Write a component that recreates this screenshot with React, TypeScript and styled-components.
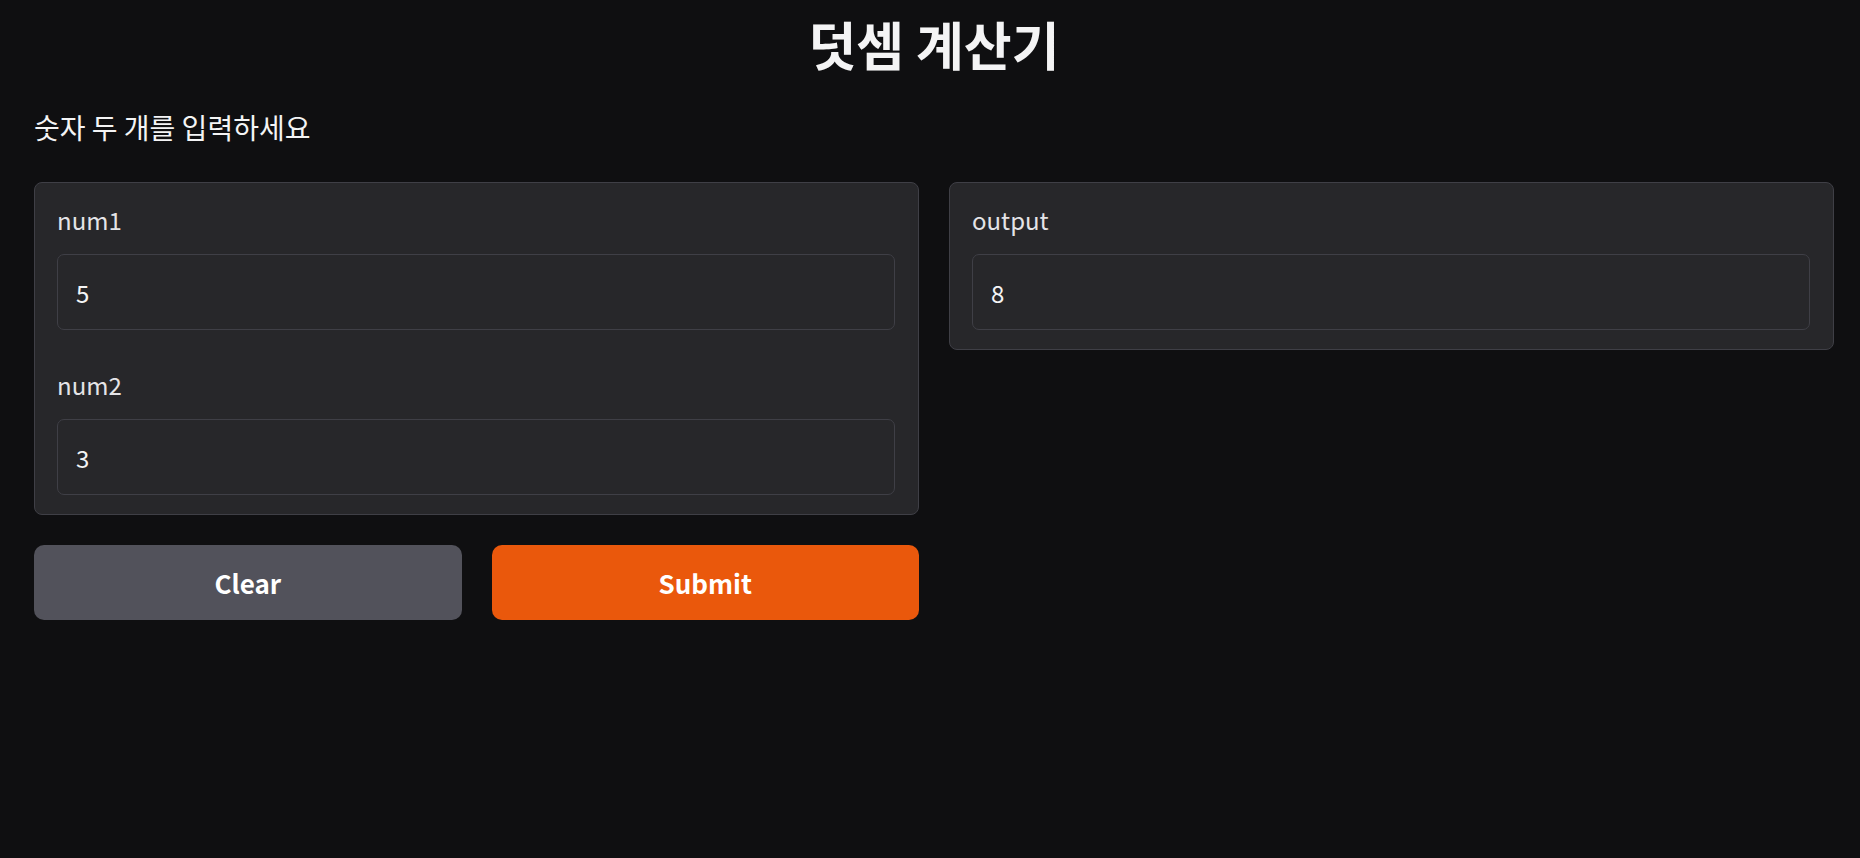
import React from 'react'
import styled, { createGlobalStyle } from 'styled-components'

const GlobalStyle = createGlobalStyle`
  html, body {
    margin: 0;
    padding: 0;
    background: #0f0f11;
  }
  body {
    font-family: "Noto Sans CJK KR", "Noto Sans", sans-serif;
    color: #f4f4f5;
  }
  * {
    box-sizing: border-box;
  }
`

type FieldProps = {
  label: string
  value: string
}

function Field({ label, value }: FieldProps) {
  return (
    <FieldBox>
      <Label>{label}</Label>
      <Input type="text" defaultValue={value} readOnly />
    </FieldBox>
  )
}

export default function App() {
  return (
    <Page>
      <GlobalStyle />
      <Title>덧셈 계산기</Title>
      <Description>숫자 두 개를 입력하세요</Description>
      <Columns>
        <Column>
          <Card>
            <Field label="num1" value="5" />
            <Field label="num2" value="3" />
          </Card>
          <ButtonRow>
            <ActionButton>Clear</ActionButton>
            <ActionButton $primary>Submit</ActionButton>
          </ButtonRow>
        </Column>
        <Column>
          <Card>
            <Field label="output" value="8" />
          </Card>
        </Column>
      </Columns>
    </Page>
  )
}

const Page = styled.div`
  display: flex;
  flex-direction: column;
  min-height: 100vh;
  padding: 12px 26px 0 34px;
`

const Title = styled.h1`
  margin: 0;
  text-align: center;
  font-size: 52px;
  line-height: 64px;
  font-weight: 700;
  color: #f4f4f5;
`

const Description = styled.p`
  margin: 32px 0 0;
  font-size: 28px;
  line-height: 38px;
  color: #f4f4f5;
`

const Columns = styled.div`
  display: grid;
  grid-template-columns: 1fr 1fr;
  gap: 30px;
  align-items: start;
  margin-top: 36px;
`

const Column = styled.div`
  display: flex;
  flex-direction: column;
  gap: 30px;
`

const Card = styled.div`
  display: flex;
  flex-direction: column;
  gap: 39px;
  padding: 21px 23px 19px 22px;
  background: #27272a;
  border: 1px solid #3f3f46;
  border-radius: 8px;
`

const FieldBox = styled.label`
  display: flex;
  flex-direction: column;
  gap: 18px;
`

const Label = styled.span`
  font-size: 24px;
  line-height: 32px;
  color: #e4e4e7;
`

const Input = styled.input`
  height: 76px;
  width: 100%;
  padding: 0 17px 0 18px;
  background: #27272a;
  border: 1px solid #3f3f46;
  border-radius: 7px;
  font-family: inherit;
  font-size: 24px;
  color: #f4f4f5;
  outline: none;
`

const ButtonRow = styled.div`
  display: grid;
  grid-template-columns: 1fr 1fr;
  gap: 30px;
`

const ActionButton = styled.button<{ $primary?: boolean }>`
  height: 75px;
  border: none;
  border-radius: 10px;
  background: ${(p) => (p.$primary ? '#ea580c' : '#52525b')};
  color: #ffffff;
  font-family: inherit;
  font-size: 26px;
  font-weight: 700;
  cursor: pointer;
`
